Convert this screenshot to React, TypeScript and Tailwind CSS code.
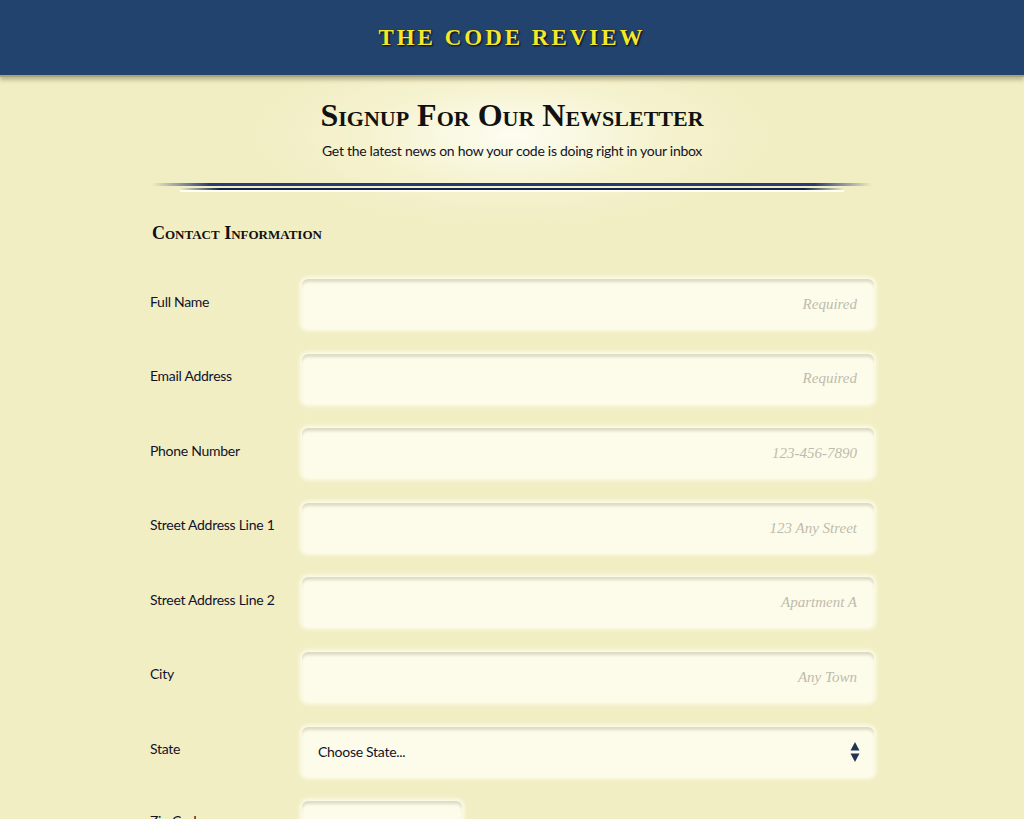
const fields = [
  { label: 'Full Name', placeholder: 'Required' },
  { label: 'Email Address', placeholder: 'Required' },
  { label: 'Phone Number', placeholder: '123-456-7890' },
  { label: 'Street Address Line 1', placeholder: '123 Any Street' },
  { label: 'Street Address Line 2', placeholder: 'Apartment A' },
  { label: 'City', placeholder: 'Any Town' },
];

const inputClass =
  "h-[50px] rounded-md bg-[#fdfcea] shadow-[inset_0_4px_3px_-1px_rgba(180,178,150,0.45),0_0_4px_2px_rgba(255,255,240,0.9)]";

export default function App() {
  return (
    <div className="min-h-[819px] bg-[#f1eec4] bg-[radial-gradient(ellipse_260px_90px_at_512px_135px,#fdfdf2_0%,rgba(248,246,215,0.6)_55%,rgba(241,238,196,0)_100%)] font-['Lato',sans-serif] text-[#12122a]">
      {/* Header */}
      <header className="h-[77px] bg-[#23436f] border-b-2 border-[#a9a37c] shadow-[0_3px_4px_rgba(120,110,70,0.45)] flex items-center justify-center">
        <h1 className="font-['Liberation_Serif',serif] font-bold text-[23px] tracking-[0.13em] text-[#f5e82c] [text-shadow:1px_1px_2px_#000] pt-[1px]">
          THE CODE REVIEW
        </h1>
      </header>

      <main className="w-[724px] mx-auto">
        {/* Title block */}
        <div className="text-center pt-[16px]">
          <h2 className="font-['Liberation_Serif',serif] [font-variant:small-caps] font-bold text-[32px] leading-[44px] text-[#111]">
            Signup For Our Newsletter
          </h2>
          <p className="text-[14px] leading-[20px] mt-[4px] tracking-[-0.02em]">
            Get the latest news on how your code is doing right in your inbox
          </p>
        </div>

        {/* Divider */}
        <div className="mt-[22px] mx-[2px] flex flex-col">
          <div className="h-[3px] bg-[linear-gradient(90deg,rgba(36,52,110,0)_0%,#2a3a78_8%,#1e3a76_50%,#2a3a78_92%,rgba(36,52,110,0)_100%)]" />
          <div className="h-[2px]" />
          <div className="h-[2px] mx-[28px] bg-[linear-gradient(90deg,rgba(20,30,60,0)_0%,#16224a_6%,#16224a_94%,rgba(20,30,60,0)_100%)]" />
          <div className="h-[2px] mx-[28px] bg-[#fffff4]" />
        </div>

        {/* Section */}
        <h3 className="mt-[29px] pl-[2px] font-['Liberation_Serif',serif] [font-variant:small-caps] font-bold text-[18px] leading-[24px] text-[#111]">
          Contact Information
        </h3>

        <div className="mt-[34px] flex flex-col gap-[24.6px]">
          {fields.map((f) => (
            <div key={f.label} className="flex items-center">
              <label className="w-[152px] text-[14px] tracking-[-0.02em] -mt-[6px]">{f.label}</label>
              <div className={`flex-1 flex items-center justify-end pr-[17px] ${inputClass}`}>
                <span className="font-['Liberation_Serif',serif] italic text-[15px] text-[#bdbbad]">
                  {f.placeholder}
                </span>
              </div>
            </div>
          ))}

          <div className="flex items-center">
            <label className="w-[152px] text-[14px] tracking-[-0.02em] -mt-[6px]">State</label>
            <div className={`flex-1 flex items-center justify-between pl-[16px] pr-[14px] ${inputClass}`}>
              <span className="text-[14px] tracking-[-0.02em]">Choose State...</span>
              <svg width="10" height="22" viewBox="0 0 10 22">
                <path d="M5 1 L9.5 9.5 H0.5 Z" fill="#1f3556" />
                <path d="M5 21 L9.5 12.5 H0.5 Z" fill="#1f3556" />
              </svg>
            </div>
          </div>

          <div className="flex items-start">
            <label className="w-[152px] text-[14px] leading-[20px] tracking-[-0.02em] mt-[10px]">Zip Code</label>
            <div className={`w-[160px] ${inputClass}`} />
          </div>
        </div>
      </main>
    </div>
  );
}
